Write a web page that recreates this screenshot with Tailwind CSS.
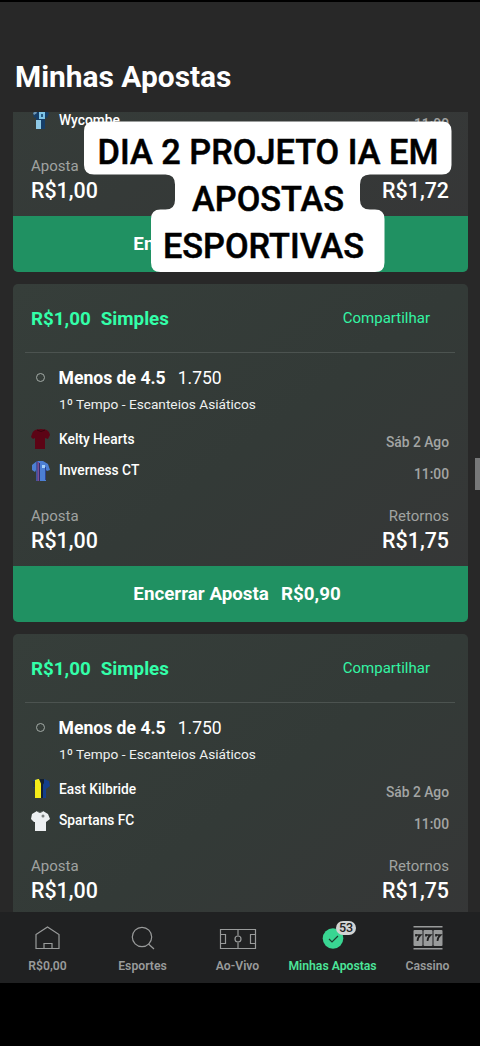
<!DOCTYPE html>
<html lang="pt-BR">
<head>
<meta charset="utf-8">
<title>Minhas Apostas</title>
<script src="https://cdn.jsdelivr.net/npm/@tailwindcss/browser@4"></script>
</head>
<body class="bg-black">
<div class="relative flex h-[1046px] w-[480px] flex-col overflow-hidden bg-black pt-[2px] font-['Roboto',sans-serif] text-white">
  <header class="h-[110px] shrink-0 bg-[#282828] pl-[15px] pt-[55px]">
    <h1 class="text-[29.9px] leading-[40px] font-bold whitespace-nowrap">Minhas Apostas</h1>
  </header>

  <main class="flex h-[800px] shrink-0 flex-col gap-3 overflow-hidden bg-[#282828] px-[12.5px]">
    <article class="-mt-[178px] flex h-[338px] shrink-0 flex-col overflow-hidden rounded-[5px] bg-linear-to-br from-[#363e3a] via-[#353a38] to-[#363637]">
      <div class="h-[170px] shrink-0"></div>
      <div class="flex h-[32px] shrink-0 items-center px-[18.5px]">
        <svg class="h-5 w-5" viewBox="0 0 20 20"><path d="M2 3 6 0h7l5 3-2 5-2-1v12H5V7L3 8z" fill="#163e68"/><path d="M8 2h6v7H8z" fill="#7ec4e6"/><path d="M5 10h5v9H5z" fill="#8ec9e6"/><path d="M10 4h2v3h-2z" fill="#285c86"/><path d="M2 3l3-2 1 2-3 2z" fill="#7097b4"/></svg>
        <span class="mt-[1px] ml-[8px] text-[13.75px] font-medium">Wycombe</span>
        <span class="mt-[8px] ml-auto text-[13.8px] font-medium text-[#a3a5a4]">11:00</span>
      </div>
      <div class="mt-[19px] flex h-[48px] shrink-0 justify-between px-[18.5px]">
        <div><div class="text-[15px] leading-[23px] text-[#a0a3a1]">Aposta</div><div class="text-[21.4px] leading-[26px] font-medium">R$1,00</div></div>
        <div class="text-right"><div class="text-[15px] leading-[23px] text-[#a0a3a1]">Retornos</div><div class="text-[21.4px] leading-[26px] font-medium">R$1,72</div></div>
      </div>
      <div class="mt-auto flex h-[56px] shrink-0 items-center justify-center gap-3 bg-[#209162] pr-[6px] text-[18.8px] leading-[28px] font-bold"><span>Encerrar Aposta</span><span>R$0,90</span></div>
    </article>

    <article class="flex h-[338px] shrink-0 flex-col overflow-hidden rounded-[5px] bg-linear-to-br from-[#363e3a] via-[#333a37] to-[#363637]">
      <div class="mx-[12.5px] flex h-[69px] shrink-0 items-center border-b border-[#4c5350] pt-[2px] pr-[25px] pl-[6px]">
        <span class="text-[18.8px] font-bold text-[#33ffa9]">R$1,00</span>
        <span class="ml-[10px] text-[18.8px] font-bold text-[#33ffa9]">Simples</span>
        <span class="-mt-[1px] ml-auto text-[15px] text-[#33f5a4]">Compartilhar</span>
      </div>
      <div class="mt-[12px] flex h-[26px] shrink-0 items-center pl-[23px]">
        <span class="-mt-[1px] h-[9px] w-[9px] rounded-full border border-[#a3aaa6]"></span>
        <span class="ml-[14px] text-[17.6px] font-bold">Menos de 4.5</span>
        <span class="ml-[12px] text-[17.5px]">1.750</span>
      </div>
      <div class="h-[28px] shrink-0 pl-[46.5px] text-[13.7px] leading-[27px] text-[#eef0ef]">1º Tempo - Escanteios Asiáticos</div>
      <div class="mt-[4px] flex h-[32px] shrink-0 items-center px-[18.5px]">
        <svg class="h-5 w-5" viewBox="0 0 20 20"><path d="M1 5Q2 1 6 .5q4-1 8 0Q18 1 19 6l-2 4-3-1v11H4V9L2 10 0 8z" fill="#5c0415"/><path d="M6 1q4 3 8 0" stroke="#38020d" fill="none"/></svg>
        <span class="mt-[1px] ml-[8px] text-[13.75px] font-medium">Kelty Hearts</span>
        <span class="mt-[7px] ml-auto text-[13.8px] font-medium text-[#a3a5a4]">Sáb 2 Ago</span>
      </div>
      <div class="flex h-[31px] shrink-0 items-center px-[18.5px]">
        <svg class="h-5 w-5" viewBox="0 0 20 20"><path d="M1 4 6 0h6l5 3 2 6-3 1-1-1v11H5V9L4 11 1 9z" fill="#4c7fd4"/><path d="M6 0v20M8.500 2v18" stroke="#302b70"/><path d="M7.200 1v19" stroke="#963c70"/><path d="M14.500 6v13" stroke="#2c4390"/><path d="M11 4h3v3h-3z" fill="#a6d2fa"/></svg>
        <span class="ml-[8px] text-[13.75px] font-medium">Inverness CT</span>
        <span class="mt-[8px] ml-auto text-[13.8px] font-medium text-[#a3a5a4]">11:00</span>
      </div>
      <div class="mt-[19px] flex h-[48px] shrink-0 justify-between px-[18.5px]">
        <div><div class="text-[15px] leading-[23px] text-[#a0a3a1]">Aposta</div><div class="text-[21.4px] leading-[26px] font-medium">R$1,00</div></div>
        <div class="text-right"><div class="text-[15px] leading-[23px] text-[#a0a3a1]">Retornos</div><div class="text-[21.4px] leading-[26px] font-medium">R$1,75</div></div>
      </div>
      <div class="mt-auto flex h-[56px] shrink-0 items-center justify-center gap-3 bg-[#209162] pr-[6px] text-[18.8px] leading-[28px] font-bold"><span>Encerrar Aposta</span><span>R$0,90</span></div>
    </article>

    <article class="flex h-[338px] shrink-0 flex-col overflow-hidden rounded-[5px] bg-linear-to-br from-[#363e3a] via-[#333a37] to-[#363637]">
      <div class="mx-[12.5px] flex h-[69px] shrink-0 items-center border-b border-[#4c5350] pt-[2px] pr-[25px] pl-[6px]">
        <span class="text-[18.8px] font-bold text-[#33ffa9]">R$1,00</span>
        <span class="ml-[10px] text-[18.8px] font-bold text-[#33ffa9]">Simples</span>
        <span class="-mt-[1px] ml-auto text-[15px] text-[#33f5a4]">Compartilhar</span>
      </div>
      <div class="mt-[12px] flex h-[26px] shrink-0 items-center pl-[23px]">
        <span class="-mt-[1px] h-[9px] w-[9px] rounded-full border border-[#a3aaa6]"></span>
        <span class="ml-[14px] text-[17.6px] font-bold">Menos de 4.5</span>
        <span class="ml-[12px] text-[17.5px]">1.750</span>
      </div>
      <div class="h-[28px] shrink-0 pl-[46.5px] text-[13.7px] leading-[27px] text-[#eef0ef]">1º Tempo - Escanteios Asiáticos</div>
      <div class="mt-[4px] flex h-[32px] shrink-0 items-center px-[18.5px]">
        <svg class="h-5 w-5" viewBox="0 0 20 20"><path d="M1 2 6 0h7l5 2 1 5-4 3v9H4V8L2 9z" fill="#143f8b"/><path d="M4 1 7 0h3v19H4z" fill="#f5eb19"/><path d="M8 0h5v4l-2 3zM10 4h2v15h-2z" fill="#15202d"/><path d="M1 2h3v6H2z" fill="#2a353c"/></svg>
        <span class="mt-[1px] ml-[8px] text-[13.75px] font-medium">East Kilbride</span>
        <span class="mt-[7px] ml-auto text-[13.8px] font-medium text-[#a3a5a4]">Sáb 2 Ago</span>
      </div>
      <div class="flex h-[31px] shrink-0 items-center px-[18.5px]">
        <svg class="h-5 w-5" viewBox="0 0 20 20"><path d="M1 3 6 0q3 3 6 0l5 3 2 5-4 3v9H4v-9L3 11 0 8z" fill="#eceff1"/><path d="M6 0q3 3 6 0" stroke="#59605e" fill="none"/><circle cx="12" cy="5" r="1.500" fill="#7b8180"/></svg>
        <span class="ml-[8px] text-[13.75px] font-medium">Spartans FC</span>
        <span class="mt-[8px] ml-auto text-[13.8px] font-medium text-[#a3a5a4]">11:00</span>
      </div>
      <div class="mt-[19px] flex h-[48px] shrink-0 justify-between px-[18.5px]">
        <div><div class="text-[15px] leading-[23px] text-[#a0a3a1]">Aposta</div><div class="text-[21.4px] leading-[26px] font-medium">R$1,00</div></div>
        <div class="text-right"><div class="text-[15px] leading-[23px] text-[#a0a3a1]">Retornos</div><div class="text-[21.4px] leading-[26px] font-medium">R$1,75</div></div>
      </div>
    </article>
  </main>

  <nav class="grid h-[71px] shrink-0 grid-cols-5 bg-[#202122] pt-[13px] pr-[5px] text-center text-[12.2px] font-semibold whitespace-nowrap text-[#999b9b]">
    <div class="flex flex-col items-center">
      <svg class="h-7 w-8" viewBox="0 0 32 28" fill="none" stroke="#999b9b" stroke-width="1.200"><path d="M4 9.500 15.500 2 27 9.500V23.500H4zM12 23v-4.500h8V23"/></svg>
      <span class="leading-[26px]">R$0,00</span>
    </div>
    <div class="flex flex-col items-center">
      <svg class="h-7 w-8" viewBox="0 0 32 28" fill="none" stroke="#999b9b" stroke-width="1.200"><circle cx="15" cy="12" r="9.700"/><path d="m21.500 19 5.500 5"/></svg>
      <span class="leading-[26px]">Esportes</span>
    </div>
    <div class="flex flex-col items-center">
      <svg class="h-7 w-10" viewBox="0 0 40 28" fill="none" stroke="#999b9b" stroke-width="1.200"><path d="M2.500 4.500h35v19h-35zM20 4.500v6M20 17.500v6M3 9.500h4.500v9H3M37 9.500h-4.500v9H37"/><circle cx="20" cy="14" r="3"/></svg>
      <span class="leading-[26px]">Ao-Vivo</span>
    </div>
    <div class="relative flex flex-col items-center text-[#4ce69a]">
      <svg class="h-7 w-8" viewBox="0 0 32 28"><circle cx="16" cy="13.500" r="10.300" fill="#39d592"/><path d="m12 14 3 3 6-6" fill="none" stroke="#1c3c2e" stroke-width="1.200"/></svg>
      <span class="absolute -top-[4px] left-[51px] flex h-[14px] w-5 items-center justify-center rounded-full bg-[#d2d3d3] text-[12.5px] leading-none font-medium text-[#222]">53</span>
      <span class="leading-[26px]">Minhas Apostas</span>
    </div>
    <div class="flex flex-col items-center">
      <svg class="h-7 w-8" viewBox="0 0 32 28" fill="#999b9b"><path d="M1.500 1h29v1.500h-29zM1.500 23h29v1.500h-29z"/><rect x="1.500" y="5" width="9" height="16" rx="1"/><rect x="11.500" y="5" width="9" height="16" rx="1"/><rect x="21.500" y="5" width="9" height="16" rx="1"/><path d="M4 9v2.500M4 10h4.500q-3 2.500-3 6M14 9v2.500M14 10h4.500q-3 2.500-3 6M24 9v2.500M24 10h4.500q-3 2.500-3 6" fill="none" stroke="#222" stroke-width="1.700"/></svg>
      <span class="leading-[26px]">Cassino</span>
    </div>
  </nav>

  <div class="absolute top-[458px] right-0 h-[32px] w-[5px] bg-[#777879]"></div>

  <div class="absolute top-[121px] left-[84px] h-[152px] w-[368px] text-[34.3px] font-medium text-black">
    <svg class="absolute inset-0" width="368" height="152" viewBox="0 0 368 152"><path fill="#fff" d="M10 .5H358q9.500 0 9.500 9.500V44q0 9.500-9.500 9.500H286q-10 0-10 10V79q0 9.500 10 9.500h5q9.500 0 9.500 9.500v43.500q0 9.500-9.500 9.500H76.500q-9.500 0-9.500-9.500V98q0-9.500 9.500-9.500h5q9.500 0 9.500-9.500V63.500q0-10-9.500-10H10Q0 53.500 0 44V10Q0 .500 10 .500z"/></svg>
    <div class="relative flex flex-col items-center pt-[8px] text-center leading-[47px] whitespace-nowrap [-webkit-text-stroke:0.5px_black]">
      <span>DIA 2 PROJETO IA EM</span>
      <span>APOSTAS</span>
      <span class="mr-[9px]">ESPORTIVAS</span>
    </div>
  </div>
</div>
</body>
</html>
